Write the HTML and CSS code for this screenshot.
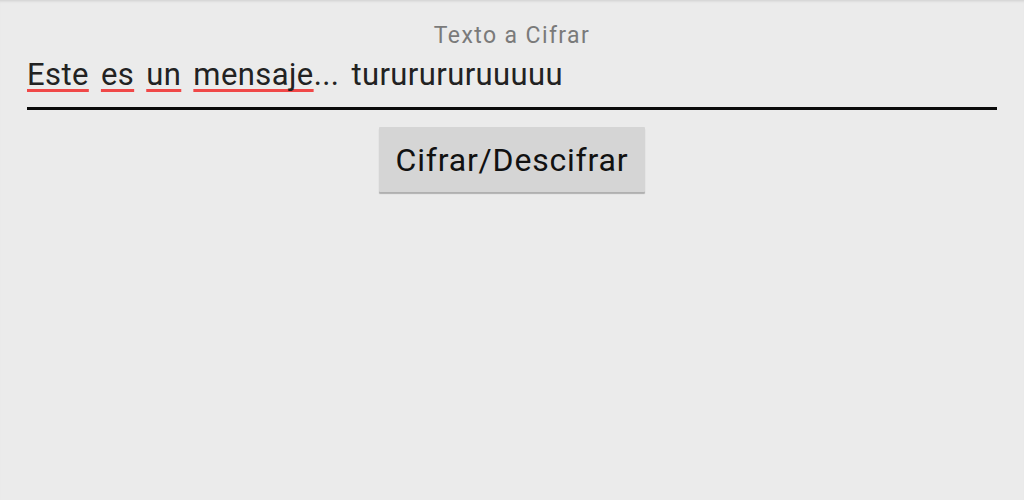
FILE: index.html
```html
<!DOCTYPE html>
<html>
<head>
<meta charset="utf-8">
<link rel="stylesheet" href="styles.css">
</head>
<body>
<div class="screen">
  <div class="label">Texto a Cifrar</div>
  <div class="field">
    <span class="misspelled">Este</span> <span class="misspelled">es</span> <span class="misspelled">un</span> <span class="misspelled">mensaje</span>... tururururuuuuu
  </div>
  <div class="actions">
    <button class="btn">Cifrar/Descifrar</button>
  </div>
</div>
</body>
</html>
```
FILE: styles.css
```css
html, body {
  margin: 0;
  padding: 0;
  background: #ebebeb;
}
.screen {
  width: 1024px;
  height: 500px;
  box-sizing: border-box;
  padding: 0 27px;
  font-family: Roboto, "Noto Sans", sans-serif;
  background: #ebebeb;
  box-shadow: inset 0 3px 3px -2px rgba(0,0,0,0.12);
  display: flex;
  flex-direction: column;
}
.label {
  text-align: center;
  font-size: 23px;
  letter-spacing: 1.4px;
  color: #7a7a7a;
  line-height: 26px;
  margin-top: 23px;
}
.field {
  font-size: 31px;
  letter-spacing: 0.4px;
  word-spacing: 4px;
  line-height: 36px;
  color: #222;
  margin-top: 8px;
  padding-bottom: 14px;
  border-bottom: 3px solid #0a0a0a;
  white-space: nowrap;
}
.misspelled {
  text-decoration: underline;
  text-decoration-color: #f04848;
  text-decoration-thickness: 3px;
  text-underline-offset: 4px;
  text-decoration-skip-ink: none;
}
.actions {
  display: flex;
  justify-content: center;
  margin-top: 17px;
}
.btn {
  width: 266px;
  height: 65px;
  border: none;
  border-radius: 1px;
  background: #d5d5d5;
  box-shadow: 0 2px 1px rgba(0,0,0,0.25);
  font-family: Roboto, "Noto Sans", sans-serif;
  font-size: 32px;
  letter-spacing: 0.8px;
  color: #111;
  padding: 0;
}
```
